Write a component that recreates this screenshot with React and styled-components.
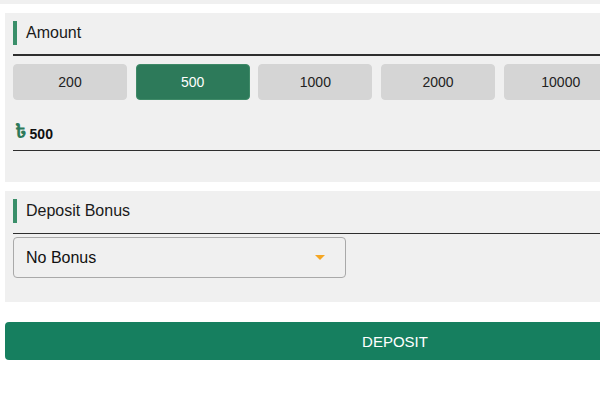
import React, { useState } from "react";
import styled, { createGlobalStyle } from "styled-components";

const GlobalStyle = createGlobalStyle`
  body {
    margin: 0;
    background: #ffffff;
    overflow: hidden;
    font-family: "Liberation Sans", Arial, sans-serif;
  }
`;

const amounts = [200, 500, 1000, 2000, 10000, 25000];

const DepositForm = () => {
  const [amount, setAmount] = useState(500);

  const amountButtons = amounts.map((value) => {
    return (
      <AmountButton
        key={value}
        $active={value === amount}
        onClick={() => setAmount(value)}
      >
        {value}
      </AmountButton>
    );
  });

  return (
    <Page>
      <GlobalStyle />
      <PrevTail />
      <Content>
        <Panel $bottom={31}>
          <SectionTitle>Amount</SectionTitle>
          <Divider />
          <AmountGrid>{amountButtons}</AmountGrid>
          <AmountField>
            <Currency>৳</Currency>
            <AmountValue>{amount}</AmountValue>
          </AmountField>
        </Panel>

        <Panel $bottom={24}>
          <SectionTitle>Deposit Bonus</SectionTitle>
          <Divider $thin />
          <Select>
            <span>No Bonus</span>
            <Caret />
          </Select>
        </Panel>

        <DepositButton>DEPOSIT</DepositButton>
      </Content>
    </Page>
  );
};

const Page = styled.div`
  width: 100%;
`;

const PrevTail = styled.div`
  height: 4px;
  width: 100%;
  background: #f0f0f0;
`;

const Content = styled.div`
  width: 780px;
  margin-left: 5px;
  padding-top: 9px;
  display: flex;
  flex-direction: column;
  gap: 9px;
`;

const Panel = styled.section`
  background: #f0f0f0;
  padding: 8px 8px ${({ $bottom }) => $bottom}px;
`;

const SectionTitle = styled.h3`
  margin: 0;
  height: 24px;
  display: flex;
  align-items: center;
  border-left: 4px solid #3a8f6a;
  padding-left: 9px;
  font-size: 16px;
  font-weight: normal;
  color: #1a1a1a;
`;

const Divider = styled.div`
  margin-top: ${({ $thin }) => ($thin ? 10 : 9)}px;
  border-top: ${({ $thin }) => ($thin ? 1.5 : 2)}px solid #2e2e2e;
`;

const AmountGrid = styled.div`
  margin-top: 8px;
  display: grid;
  grid-template-columns: repeat(6, 114px);
  column-gap: 8.7px;
`;

const AmountButton = styled.button`
  height: 36px;
  border-radius: 4px;
  border: 1px solid ${({ $active }) => ($active ? "#3f8a68" : "#d5d5d5")};
  background: ${({ $active }) => ($active ? "#2d7a5a" : "#d5d5d5")};
  color: ${({ $active }) => ($active ? "#ffffff" : "#222222")};
  font-family: "Liberation Sans", Arial, sans-serif;
  font-size: 14px;
  cursor: pointer;
  padding: 0;
`;

const AmountField = styled.div`
  margin-top: 17px;
  height: 33px;
  display: flex;
  align-items: center;
  gap: 3px;
  padding-left: 2px;
  border-bottom: 1.5px solid #2e2e2e;
`;

const Currency = styled.span`
  color: #2d7a5a;
  font-size: 19px;
  font-weight: bold;
  line-height: 1;
  font-family: "Noto Sans Bengali", "Noto Sans", "DejaVu Sans", sans-serif;
`;

const AmountValue = styled.span`
  font-size: 14px;
  font-weight: bold;
  color: #111111;
`;

const Select = styled.div`
  margin-top: 3px;
  width: 333px;
  height: 41px;
  box-sizing: border-box;
  border: 1px solid #a9a9a9;
  border-radius: 4px;
  display: flex;
  align-items: center;
  justify-content: space-between;
  padding: 0 20px 0 12px;
  font-size: 16px;
  color: #111111;
`;

const Caret = styled.span`
  width: 0;
  height: 0;
  border-left: 5px solid transparent;
  border-right: 5px solid transparent;
  border-top: 5px solid #f5a623;
`;

const DepositButton = styled.button`
  margin-top: 11px;
  height: 38px;
  border: none;
  border-radius: 4px;
  background: #167f5f;
  color: #ffffff;
  font-family: "Liberation Sans", Arial, sans-serif;
  font-size: 15px;
  cursor: pointer;
`;

export default DepositForm;
